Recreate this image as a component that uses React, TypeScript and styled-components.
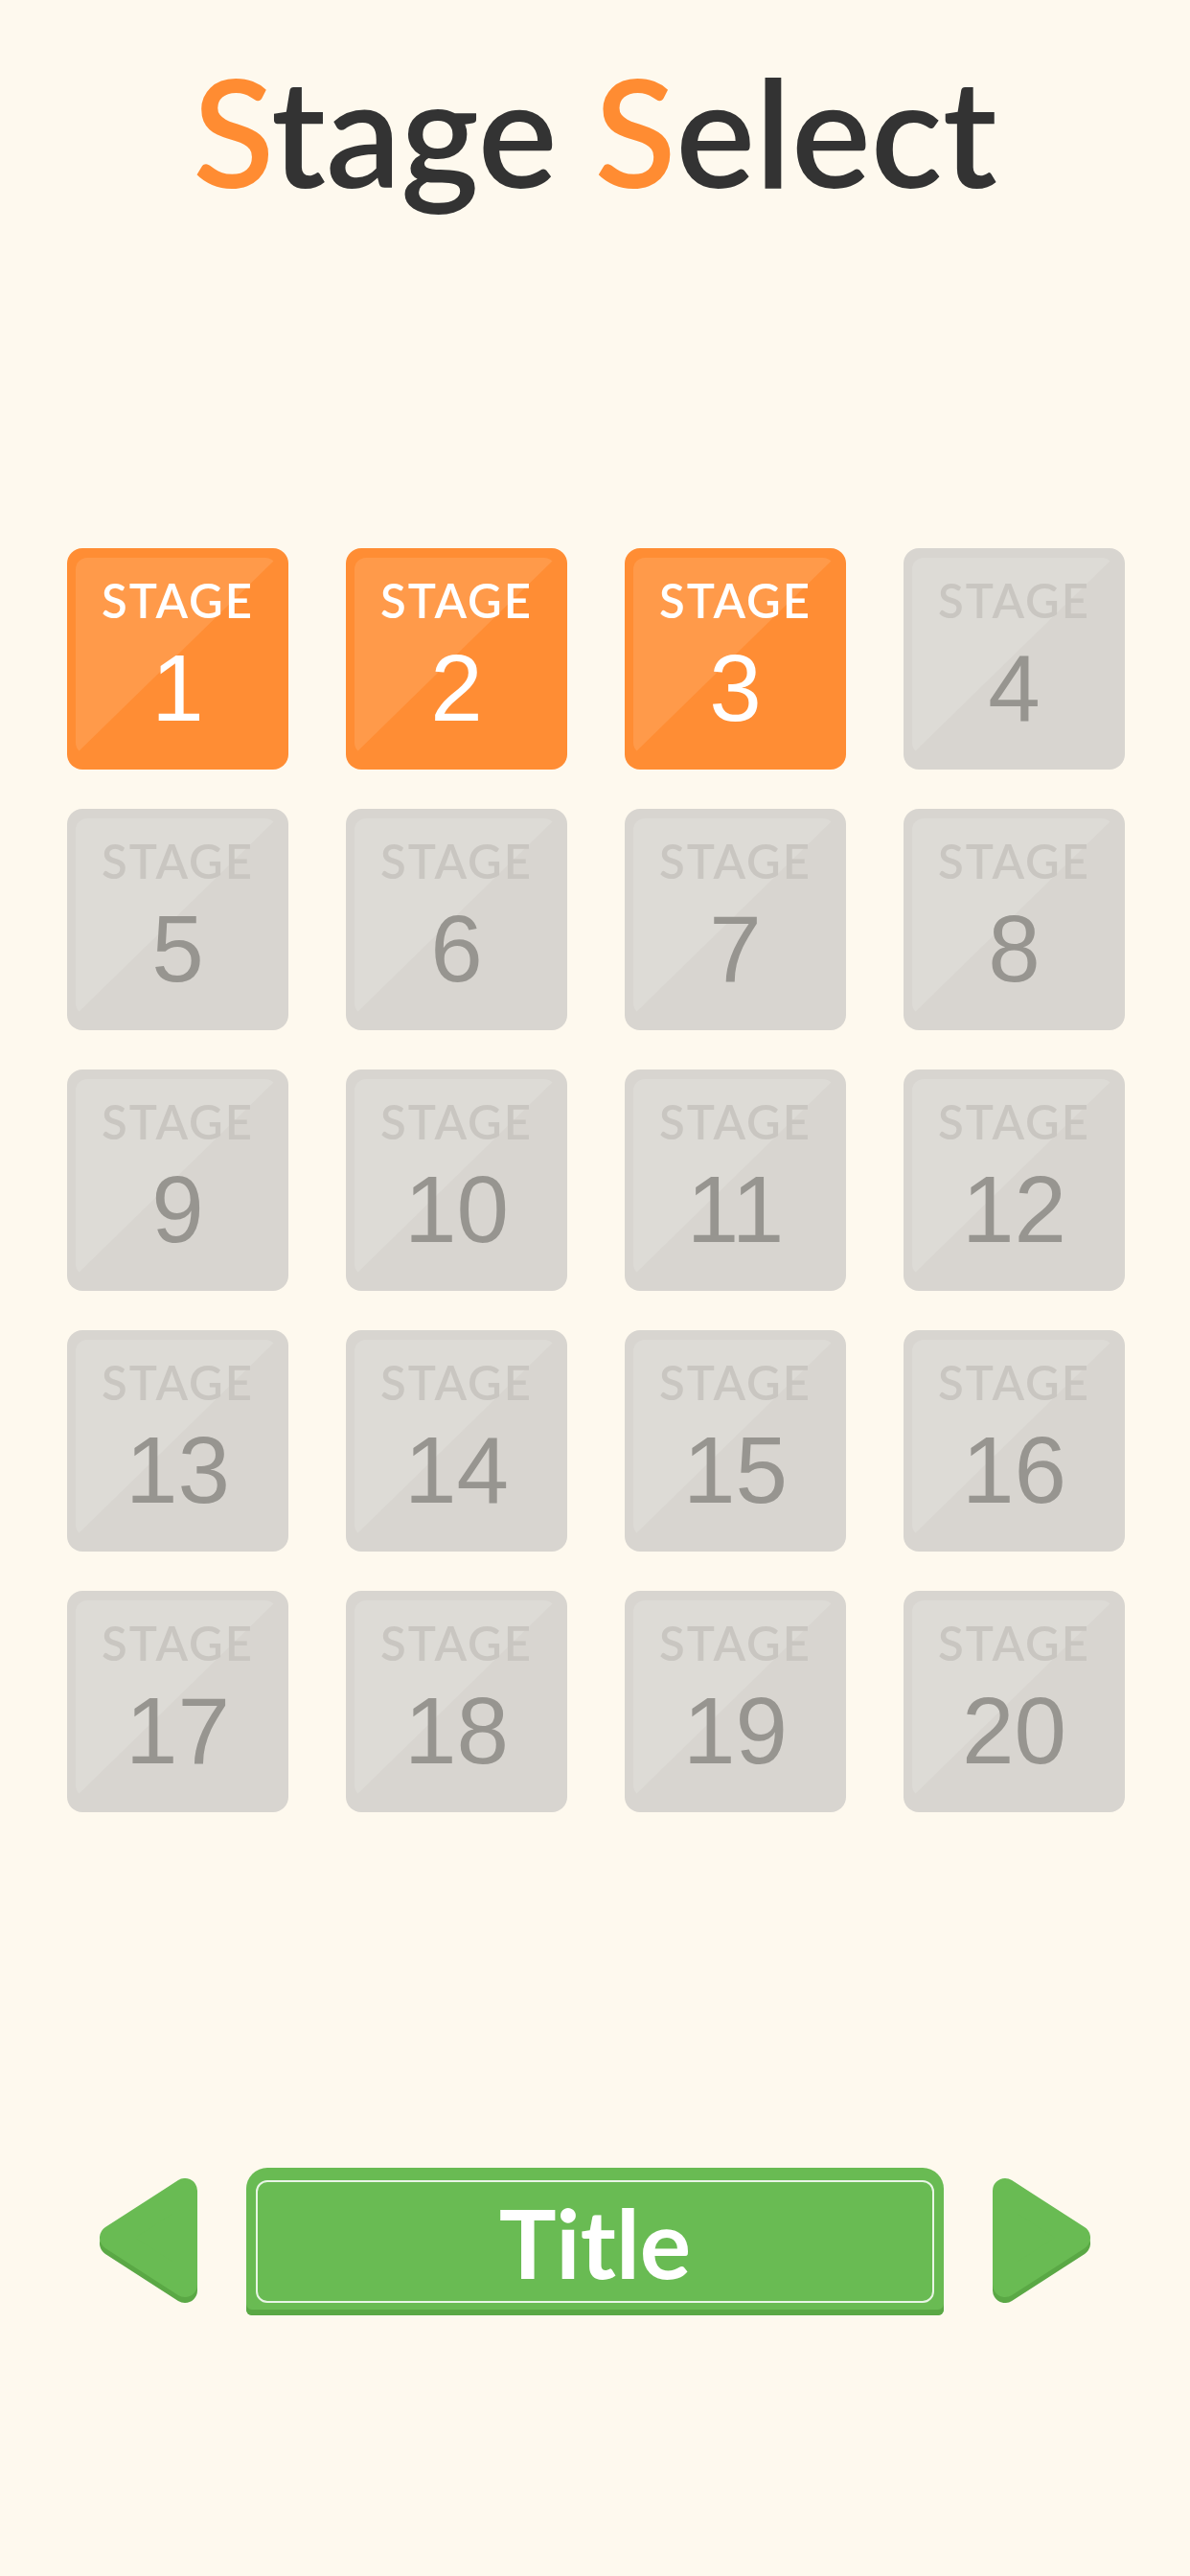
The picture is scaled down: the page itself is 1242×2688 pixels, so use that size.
import styled, { createGlobalStyle } from 'styled-components'

const GlobalStyle = createGlobalStyle`
    html, body {
        margin: 0;
        padding: 0;
        background: #fef9ee;
    }
`

const Page = styled.div`
    width: 1242px;
    min-height: 2688px;
    background: #fef9ee;
    display: flex;
    flex-direction: column;
    align-items: center;
`

const Heading = styled.h1`
    margin: 58px 0 0;
    font-family: 'Lato', 'Noto Sans', sans-serif;
    font-weight: 600;
    font-size: 156px;
    line-height: 156px;
    letter-spacing: 0px;
    color: #333333;
`

const Accent = styled.span`
    color: #ff8c32;
`

const Grid = styled.div`
    margin-top: 358px;
    padding-left: 2px;
    display: grid;
    grid-template-columns: repeat(4, 231px);
    column-gap: 60px;
    row-gap: 41px;
`

const Tile = styled.div<{ $open: boolean }>`
    position: relative;
    width: 231px;
    height: 231px;
    border-radius: 16px;
    background: ${p => (p.$open ? '#ff8d34' : '#d8d5d0')};
    display: flex;
    flex-direction: column;
    align-items: center;
    padding-top: 29px;
    box-sizing: border-box;

    &::before {
        content: '';
        position: absolute;
        top: 10px;
        left: 9px;
        right: 12px;
        bottom: 16px;
        border-radius: 12px;
        background: ${p => (p.$open ? '#ff9a4a' : '#dddbd6')};
        clip-path: polygon(0 0, 100% 0, 0 100%);
    }
`

const TileLabel = styled.span<{ $open: boolean }>`
    position: relative;
    font-family: 'Lato', 'Noto Sans', sans-serif;
    font-weight: 600;
    font-size: 49px;
    line-height: 50px;
    letter-spacing: 2px;
    color: ${p => (p.$open ? '#ffffff' : '#c9c6c1')};
`

const TileNumber = styled.span<{ $open: boolean }>`
    position: relative;
    margin-top: 18px;
    font-family: 'Liberation Sans', Arial, sans-serif;
    font-size: 98px;
    line-height: 98px;
    color: ${p => (p.$open ? '#ffffff' : '#979590')};
`

const Controls = styled.div`
    margin-top: 371px;
    display: flex;
    align-items: flex-start;
    gap: 51px;
`

const ArrowButton = styled.button`
    margin-top: 11px;
    padding: 0;
    border: none;
    background: none;
    width: 102px;
    height: 130px;
    cursor: pointer;

    svg {
        display: block;
    }
`

const TitleButton = styled.button`
    width: 728px;
    height: 154px;
    padding: 10px;
    border: none;
    border-radius: 22px 22px 6px 6px;
    background: #69bb53;
    box-shadow: inset 0 -6px 0 #5aa845;
    box-sizing: border-box;
    cursor: pointer;
`

const TitleInner = styled.div`
    height: 128px;
    border: 2px solid rgba(255, 255, 255, 0.85);
    border-radius: 12px;
    box-sizing: border-box;
    display: flex;
    align-items: center;
    justify-content: center;
    font-family: 'Lato', 'Noto Sans', sans-serif;
    font-weight: 700;
    font-size: 100px;
    line-height: 100px;
    color: #ffffff;
`

function Arrow({ dir }: { dir: 'left' | 'right' }) {
    const pts = dir === 'left' ? '13,62 89,13 89,111' : '13,13 89,62 13,111'
    return (
        <svg width="102" height="130" viewBox="0 0 102 130">
            <polygon points={pts} transform="translate(0 6)" fill="#5aa845" stroke="#5aa845" strokeWidth="26" strokeLinejoin="round" />
            <polygon points={pts} fill="#69bb53" stroke="#69bb53" strokeWidth="26" strokeLinejoin="round" />
        </svg>
    )
}

const stages = Array.from({ length: 20 }, (_, i) => i + 1)
const cleared = 3

export default function App() {
    return (
        <Page>
            <GlobalStyle />
            <Heading>
                <Accent>S</Accent>tage <Accent>S</Accent>elect
            </Heading>
            <Grid>
                {stages.map(n => (
                    <Tile key={n} $open={n <= cleared}>
                        <TileLabel $open={n <= cleared}>STAGE</TileLabel>
                        <TileNumber $open={n <= cleared}>{n}</TileNumber>
                    </Tile>
                ))}
            </Grid>
            <Controls>
                <ArrowButton aria-label="previous">
                    <Arrow dir="left" />
                </ArrowButton>
                <TitleButton>
                    <TitleInner>Title</TitleInner>
                </TitleButton>
                <ArrowButton aria-label="next">
                    <Arrow dir="right" />
                </ArrowButton>
            </Controls>
        </Page>
    )
}
